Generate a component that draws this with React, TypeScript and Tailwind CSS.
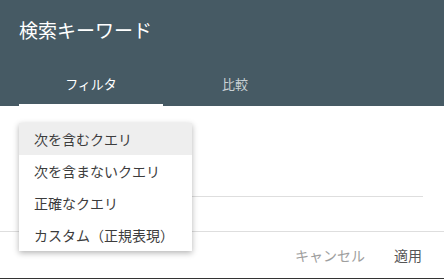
const font = { fontFamily: '"Noto Sans CJK JP", "Noto Sans", sans-serif' };

const options = ["次を含むクエリ", "次を含まないクエリ", "正確なクエリ", "カスタム（正規表現）"];

export default function App() {
  return (
    <div className="relative w-[444px] h-[280px] bg-white overflow-hidden" style={font}>
      <div className="bg-[#465a64] h-[106px] flex flex-col">
        <h2 className="pl-[19px] pt-[17px] text-[19px] leading-[26px] text-white">検索キーワード</h2>
        <div className="mt-auto flex pl-[19px]">
          <div className="w-[144px] h-[42px] flex items-center justify-center text-[13px] text-white border-b-2 border-white">
            フィルタ
          </div>
          <div className="w-[144px] h-[42px] flex items-center justify-center text-[13px] text-[#c9d1d5] border-b-2 border-transparent">
            比較
          </div>
        </div>
      </div>

      <div className="h-[91px] mx-[19px] mr-[21px] border-b border-[#dedede]" />
      <div className="h-[34px]" />
      <div className="border-t border-[#dedede] h-[47px] flex items-center justify-end pr-[22px] gap-[29px] text-[14px]">
        <span className="text-[#9e9e9e]">キャンセル</span>
        <span className="text-[#555]">適用</span>
      </div>
      <div className="h-px bg-[#333]" />

      <ul className="absolute left-[19px] top-[123px] w-[173px] bg-white shadow-[0_2px_6px_rgba(0,0,0,0.3)] text-[14px] text-[#3c3c3c]">
        {options.map((o, i) => (
          <li key={o} className={`h-[32px] flex items-center pl-[15px] ${i === 0 ? "bg-[#eeeeee]" : ""}`}>
            {o}
          </li>
        ))}
      </ul>
    </div>
  );
}
